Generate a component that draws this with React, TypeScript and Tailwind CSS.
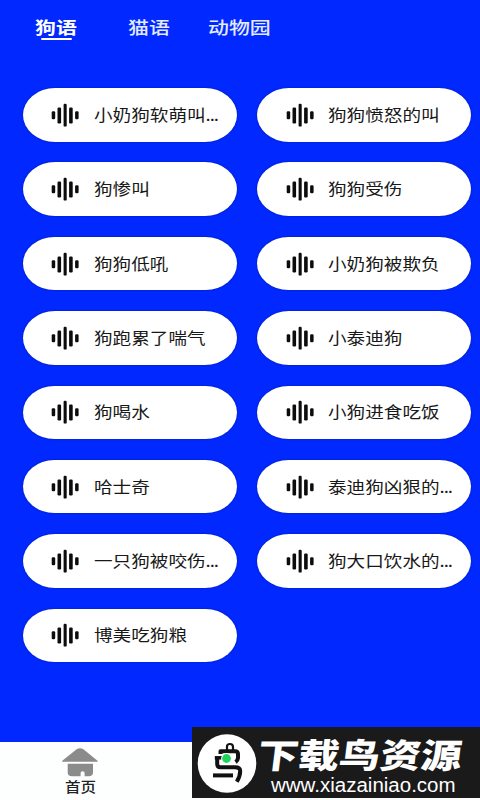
const tabs = [
  { label: '狗语', active: true, box: 'ml-[35px] w-[42px]' },
  { label: '猫语', active: false, box: 'ml-[51px] w-[42px]' },
  { label: '动物园', active: false, box: 'ml-[38px] w-[64px]' },
];

const sounds = [
  '小奶狗软萌叫...', '狗狗愤怒的叫',
  '狗惨叫', '狗狗受伤',
  '狗狗低吼', '小奶狗被欺负',
  '狗跑累了喘气', '小泰迪狗',
  '狗喝水', '小狗进食吃饭',
  '哈士奇', '泰迪狗凶狠的...',
  '一只狗被咬伤...', '狗大口饮水的...',
  '博美吃狗粮',
];

function WaveIcon() {
  return (
    <svg className="h-6 w-7 shrink-0" viewBox="0 0 28 24" fill="#0c0c0c">
      <rect x="0.7" y="8.2" width="3.5" height="8" rx="1.2" />
      <rect x="6.5" y="4.5" width="3.6" height="16" rx="1.2" />
      <rect x="12.6" y="0.8" width="3.1" height="22.8" rx="1.2" />
      <rect x="18.1" y="4.5" width="3.6" height="16" rx="1.2" />
      <rect x="24.1" y="8.2" width="3.5" height="8" rx="1.2" />
    </svg>
  );
}

function SoundPill({ name }: { name: string }) {
  const cut = name.endsWith('...');
  const label = cut ? name.slice(0, -3) : name;
  return (
    <div className="flex h-[53.5px] items-center rounded-[32px/27px] bg-white pl-[28.5px] shadow-[0_0_2px_#001a9c]">
      <WaveIcon />
      <span className="mb-[2px] ml-[14.5px] origin-left scale-x-[1.2] whitespace-nowrap text-[15.5px] leading-6 text-[#181818]">
        {label}
        {cut && <span className="tracking-[-0.9px]">...</span>}
      </span>
    </div>
  );
}

function HomeIcon() {
  return (
    <svg className="h-[30px] w-[38px]" viewBox="0 0 38 30" fill="#8b8b8b">
      <path d="M1.6 13.8 Q.4 13.6 1.6 12.5 L15.3 1.6 Q19 -1 22.7 1.6 L36.2 12.5 Q37.4 13.6 36.2 13.8 Z" />
      <path d="M6.7 15.7 H32 V24.5 Q32 28.3 27.5 28.3 H23.6 V25 Q23.6 23.3 21.7 23.3 Q19.6 23.3 19.6 25 V28.3 H11 Q6.7 28.3 6.7 24.5 Z" />
    </svg>
  );
}

function BirdLogo() {
  return (
    <svg className="ml-[5px] h-[60px] w-[60px] shrink-0" viewBox="0 0 60 60" fill="none">
      <circle cx="30" cy="30.5" r="29.3" fill="#fff" />
      <g stroke="#111" strokeWidth="4" strokeLinejoin="round">
        <path d="M30 17 V13.5 Q30 11 33 11 Q36 11 36 14 V17" strokeWidth="2.2" />
        <path d="M23.5 21 V18.3 H38 Q41 18.3 41 21 V25 Q40.8 27.5 38.5 29" />
        <path d="M17.8 24.8 H25" strokeWidth="3.5" />
        <path d="M20.2 24 V31 Q20.2 34.3 23.5 34.3 H38 Q43.2 34.3 43.2 38 Q43.2 43 39.8 48.8" />
        <path d="M16 42.4 H36" />
      </g>
      <circle cx="29.5" cy="25.5" r="5.4" fill="#fff" />
      <circle cx="29.5" cy="25.5" r="4.4" fill="#20d45b" />
    </svg>
  );
}

export default function App() {
  return (
    <main className="relative flex h-[800px] w-[480px] flex-col overflow-hidden bg-[#0028ff] font-['Noto_Sans_CJK_SC',sans-serif]">
      <nav className="flex h-[88px] shrink-0 items-start pt-[15px]">
        {tabs.map((tab) => (
          <div key={tab.label} className={`${tab.box} flex shrink-0 flex-col`}>
            <span
              className={`origin-left scale-x-[1.23] whitespace-nowrap text-[17px] leading-6 ${tab.active ? 'font-bold text-white' : 'font-medium text-[#e3ebff]'}`}
            >
              {tab.label}
            </span>
            {tab.active && <span className="-mt-px ml-[5.5px] h-[2px] w-[31px] rounded-full bg-white" />}
          </div>
        ))}
      </nav>

      <section className="grid grow grid-cols-[214px_214px] content-start gap-x-[20.5px] gap-y-[20.9px] pl-[22.5px]">
        {sounds.map((name) => (
          <SoundPill key={name} name={name} />
        ))}
      </section>

      <footer className="flex h-[58px] shrink-0 bg-[#fdffff]">
        <div className="flex w-[160px] flex-col items-center pt-[6px]">
          <HomeIcon />
          <span className="-mt-[2px] scale-x-[1.15] text-[13.5px] font-medium leading-[20px] text-[#222]">首页</span>
        </div>
      </footer>

      <aside className="absolute left-[192px] top-[727px] flex h-[71px] w-[288px] items-center bg-[#1a1a1a] text-white">
        <BirdLogo />
        <div className="flex h-full flex-col">
          <span className="ml-px mt-[9px] origin-left -skew-x-6 scale-x-[1.2] whitespace-nowrap text-[34px] font-black leading-[36px]">
            下载鸟资源
          </span>
          <span className="ml-[14px] mt-[2px] origin-left scale-x-[1.025] whitespace-nowrap font-['Liberation_Sans',sans-serif] text-[20px] leading-[22px]">
            www.xiazainiao.com
          </span>
        </div>
      </aside>
    </main>
  );
}
